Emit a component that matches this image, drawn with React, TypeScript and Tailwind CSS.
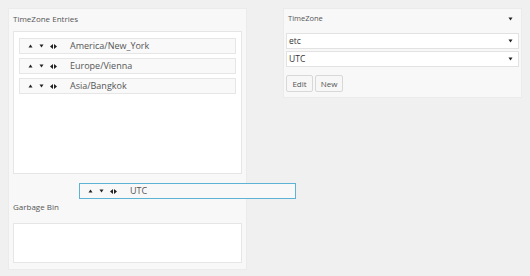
import React from 'react';

const font = { fontFamily: '"Open Sans", "Liberation Sans", sans-serif' };

function Up() {
  return (
    <svg width="5" height="4" viewBox="0 0 5 4" className="shrink-0">
      <path d="M2.5 0.5 L4.5 3.5 L0.5 3.5 Z" fill="#222" />
    </svg>
  );
}

function Down() {
  return (
    <svg width="5" height="4" viewBox="0 0 5 4" className="shrink-0">
      <path d="M0.5 0.5 L4.5 0.5 L2.5 3.5 Z" fill="#222" />
    </svg>
  );
}

function LeftRight() {
  return (
    <svg width="7" height="5" viewBox="0 0 7 5" className="shrink-0">
      <path d="M0 2.5 L3 0 L3 5 Z M7 2.5 L4 0 L4 5 Z" fill="#222" />
    </svg>
  );
}

function Entry({ label, drag = false }: { label: string; drag?: boolean }) {
  return (
    <div
      className={`flex items-center h-[16px] text-[9px] text-[#555] ${
        drag
          ? 'border border-[#5cb3d4] bg-[#f8f8f8]'
          : 'border border-[#e6e6e6] bg-[#f9f9f9]'
      }`}
    >
      <div className="flex items-center pl-[8px] gap-[6px] w-[50px]">
        <Up />
        <Down />
        <LeftRight />
      </div>
      <span>{label}</span>
    </div>
  );
}

function Select({ value }: { value: string }) {
  return (
    <div className="flex items-center justify-between h-[16px] bg-white border border-[#e2e2e2] pl-[2px] pr-[5px] text-[8.5px] text-[#333]">
      <span>{value}</span>
      <Down />
    </div>
  );
}

export default function App() {
  return (
    <div className="w-[530px] h-[276px] bg-[#f0f0f0] relative" style={font}>
      <div className="flex gap-[36px] pt-[8px] pl-[8px] items-start">
        {/* left column */}
        <div className="w-[239px] bg-[#f8f8f8] border border-[#ebebeb] px-[4px] pt-[4px] pb-[6px]">
          <h3 className="text-[8px] leading-[12px] text-[#555] font-normal mb-[6px]">TimeZone Entries</h3>
          <div className="h-[143px] bg-white border border-[#e6e6e6] px-[5px] pt-[6px] flex flex-col gap-[4px]">
            <Entry label="America/New_York" />
            <Entry label="Europe/Vienna" />
            <Entry label="Asia/Bangkok" />
          </div>
          <h3 className="text-[8px] leading-[12px] text-[#555] font-normal mt-[27px] mb-[10px]">Garbage Bin</h3>
          <div className="h-[40px] bg-white border border-[#e6e6e6]" />
        </div>

        {/* right column */}
        <div className="w-[239px] bg-[#f8f8f8] border border-[#ebebeb] px-[2px] pt-[4px] pb-[5px]">
          <div className="flex items-center justify-between pl-[2px] pr-[6px] h-[12px] mb-[8px]">
            <h3 className="text-[7.5px] font-normal text-[#555]">TimeZone</h3>
            <Down />
          </div>
          <div className="flex flex-col gap-[2px]">
            <Select value="etc" />
            <Select value="UTC" />
          </div>
          <div className="flex gap-[2px] mt-[8px]">
            <button className="h-[17px] w-[27px] bg-[#f7f7f7] border border-[#d8d8d8] rounded-[2px] text-[8px] text-[#555]">Edit</button>
            <button className="h-[17px] w-[28px] bg-[#f7f7f7] border border-[#d8d8d8] rounded-[2px] text-[8px] text-[#555]">New</button>
          </div>
        </div>
      </div>

      {/* drag helper */}
      <div className="absolute left-[79px] top-[183px] w-[217px]">
        <Entry label="UTC" drag />
      </div>
    </div>
  );
}
